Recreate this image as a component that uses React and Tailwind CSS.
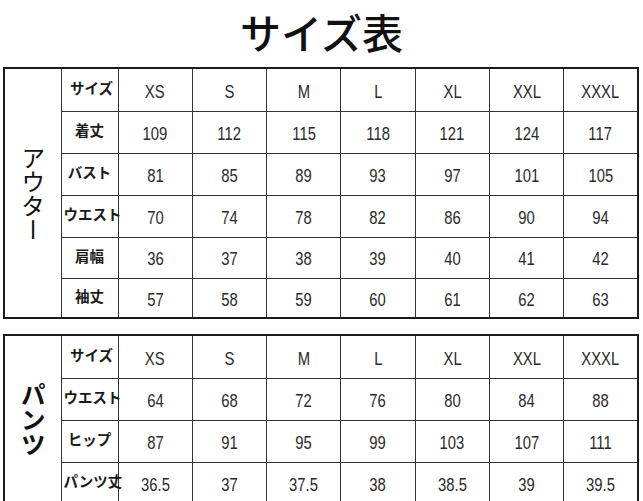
const sizes = ["XS", "S", "M", "L", "XL", "XXL", "XXXL"];

const outer = {
  title: "アウター",
  rows: [
    { label: "着丈", values: ["109", "112", "115", "118", "121", "124", "117"], h: "h-[42px]" },
    { label: "バスト", values: ["81", "85", "89", "93", "97", "101", "105"], h: "h-[42px]" },
    { label: "ウエスト", values: ["70", "74", "78", "82", "86", "90", "94"], h: "h-[42px]" },
    { label: "肩幅", values: ["36", "37", "38", "39", "40", "41", "42"], h: "h-[41px]" },
    { label: "袖丈", values: ["57", "58", "59", "60", "61", "62", "63"], h: "h-[40px]" },
  ],
};

const pants = {
  title: "パンツ",
  rows: [
    { label: "ウエスト", values: ["64", "68", "72", "76", "80", "84", "88"], h: "h-[42px]" },
    { label: "ヒップ", values: ["87", "91", "95", "99", "103", "107", "111"], h: "h-[42px]" },
    { label: "パンツ丈", values: ["36.5", "37", "37.5", "38", "38.5", "39", "39.5"], h: "h-[42px]" },
    { label: "", values: ["", "", "", "", "", "", ""], h: "h-[42px]" },
  ],
};

function Num({ children }) {
  return (
    <span className="inline-block scale-x-[0.78] translate-y-[2px] font-['Liberation_Sans',sans-serif] text-[19px] text-[#2a2a2a]">
      {children}
    </span>
  );
}

function Label({ children }) {
  return (
    <span className="block -translate-y-[2px] whitespace-nowrap font-['Noto_Sans_CJK_JP',sans-serif] text-[14.5px] font-bold text-[#1a1a1a]">
      {children}
    </span>
  );
}

function SizeTable({ data, catClass }) {
  return (
    <table className="w-[636px] table-fixed border-collapse border-2 border-[#1b1b1b]">
      <colgroup>
        <col className="w-[57px]" />
        <col className="w-[57px]" />
        {sizes.map((s) => (
          <col key={s} />
        ))}
      </colgroup>
      <tbody>
        <tr className="h-[43px]">
          <td
            rowSpan={data.rows.length + 1}
            className="border border-[#333] text-center align-middle"
          >
            <span className={catClass}>{data.title}</span>
          </td>
          <td className="border border-[#333] pl-[4px] text-center">
            <Label>サイズ</Label>
          </td>
          {sizes.map((s) => (
            <td key={s} className="border border-[#333] text-center">
              <Num>{s}</Num>
            </td>
          ))}
        </tr>
        {data.rows.map((r, idx) => (
          <tr key={idx} className={r.h}>
            <td className="border border-[#333] px-[2px] text-center">
              <Label>{r.label}</Label>
            </td>
            {r.values.map((v, i) => (
              <td key={i} className="border border-[#333] text-center">
                <Num>{v}</Num>
              </td>
            ))}
          </tr>
        ))}
      </tbody>
    </table>
  );
}

export default function App() {
  return (
    <div className="h-[501px] w-[643px] overflow-hidden bg-white">
      <div className="flex h-[67px] items-center justify-center pb-[4px]">
        <h1 className="font-['Noto_Sans_CJK_JP',sans-serif] text-[41px] font-medium leading-none text-[#111]">
          サイズ表
        </h1>
      </div>
      <div className="pl-[3px]">
        <SizeTable
          data={outer}
          catClass="inline-block translate-y-[4px] font-['Noto_Sans_CJK_JP',sans-serif] text-[24px] leading-[24px] text-[#111] [writing-mode:vertical-rl]"
        />
        <div className="h-[15px]" />
        <SizeTable
          data={pants}
          catClass="inline-block -translate-y-[18px] font-['Noto_Sans_CJK_JP',sans-serif] text-[25px] font-bold leading-[25px] text-[#111] [writing-mode:vertical-rl]"
        />
      </div>
    </div>
  );
}
